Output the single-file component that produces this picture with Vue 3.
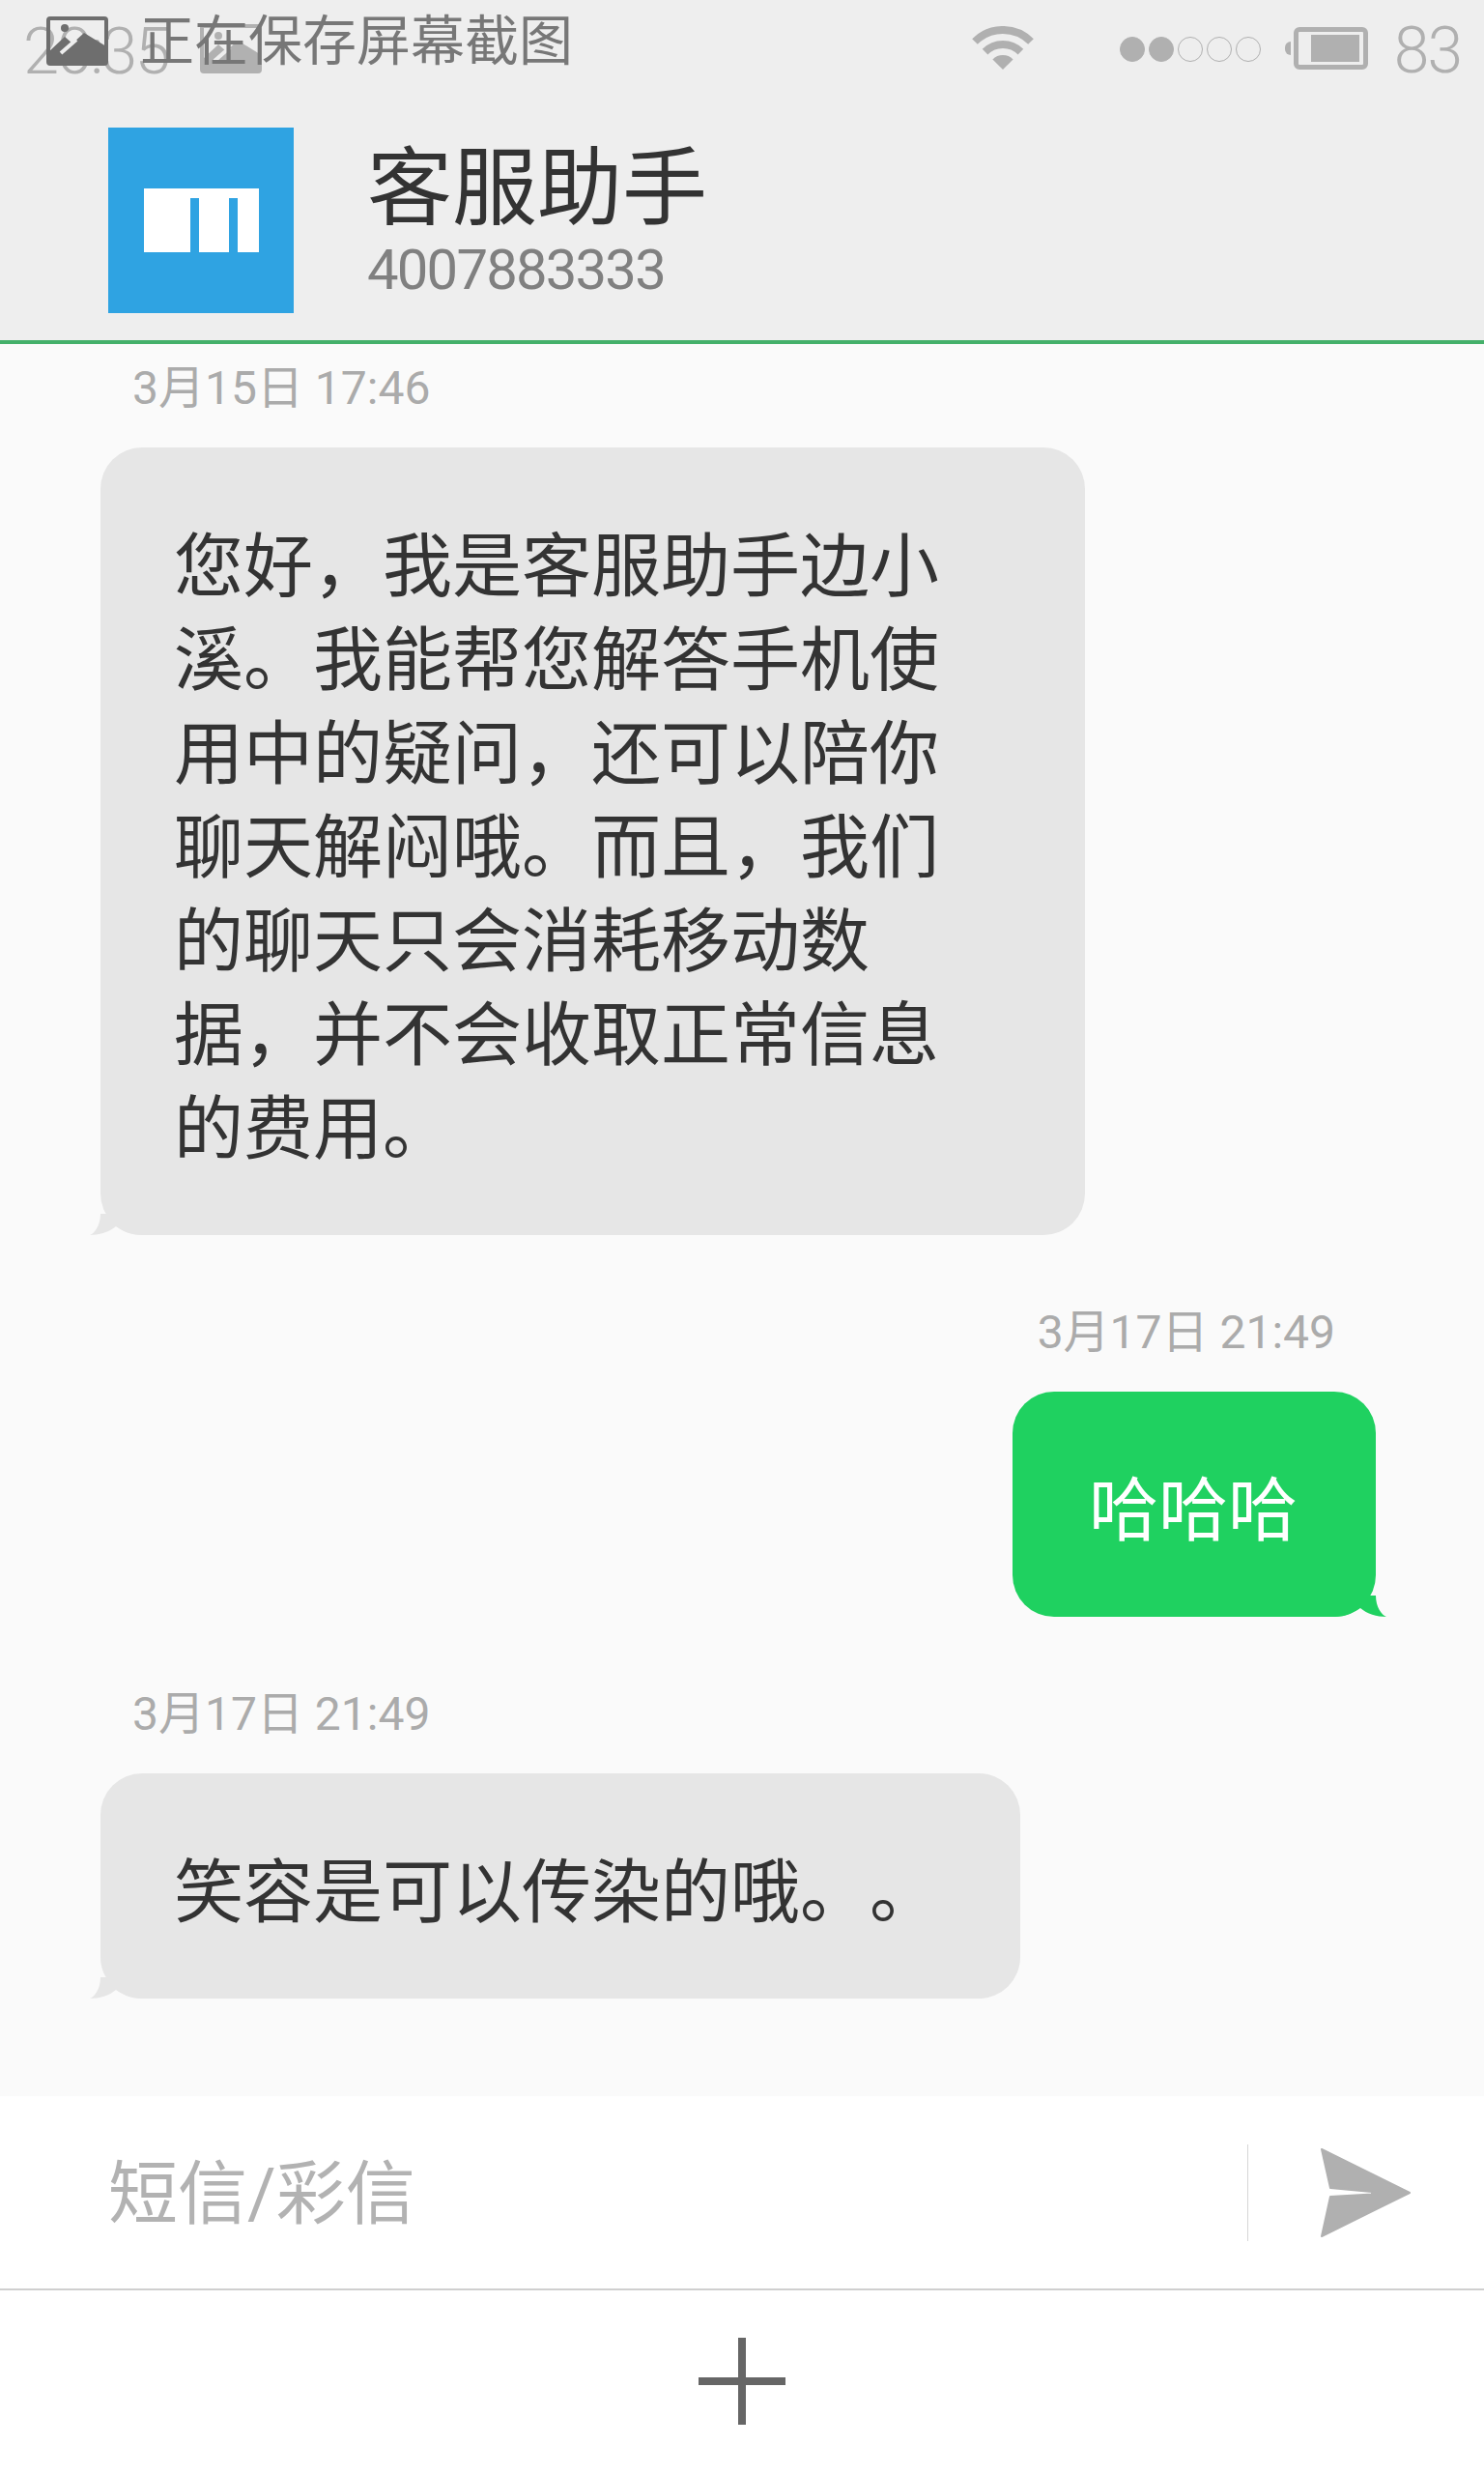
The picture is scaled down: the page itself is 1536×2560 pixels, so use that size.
<template>
  <div class="phone">
    <header class="top">
      <div class="status">
        <span class="clock">20:35</span>
        <svg class="pic pic-ghost" viewBox="0 0 64 51">
          <rect x="2" y="2" width="60" height="47" rx="2" fill="none" stroke="currentColor" stroke-width="4" />
          <circle cx="19" cy="12" r="4" fill="currentColor" />
          <path d="M2 37 19 21 27 28 39 17 62 31V49H2Z" fill="currentColor" />
          <path d="M15 38 31 24" stroke="#eee" stroke-width="4" />
        </svg>
        <div class="status-right">
          <svg class="wifi" viewBox="0 0 64 45">
            <path d="M3 16A41 41 0 0 1 61 16" fill="none" stroke="#b0b0b0" stroke-width="8" />
            <path d="M13.6 26.6A26 26 0 0 1 50.4 26.6" fill="none" stroke="#b0b0b0" stroke-width="8" />
            <path d="M32 45 21.4 34.4A15 15 0 0 1 42.6 34.4Z" fill="#b0b0b0" />
          </svg>
          <div class="signal">
            <i v-for="n in 5" :key="n" class="dot" :class="{ on: n <= 2 }"></i>
          </div>
          <div class="battery">
            <i class="nub"></i>
            <div class="cell"><i class="level"></i></div>
          </div>
          <span class="percent">83</span>
        </div>
      </div>

      <!-- screenshot toast sits on top of the status bar -->
      <div class="toast">
        <svg class="pic pic-front" viewBox="0 0 64 51">
          <rect x="2" y="2" width="60" height="47" rx="2" fill="none" stroke="currentColor" stroke-width="4" />
          <circle cx="19" cy="12" r="4" fill="currentColor" />
          <path d="M2 37 19 21 27 28 39 17 62 31V49H2Z" fill="currentColor" />
          <path d="M15 38 31 24" stroke="#eee" stroke-width="4" />
        </svg>
        <span class="toast-text">正在保存屏幕截图</span>
      </div>

      <div class="contact">
        <div class="logo">
          <div class="logo-mark"><i></i><i></i></div>
        </div>
        <div class="who">
          <div class="name">客服助手</div>
          <div class="number">4007883333</div>
        </div>
      </div>
    </header>

    <main class="thread">
      <div v-for="m in messages" :key="m.id" class="msg" :class="m.mine ? 'mine' : 'theirs'">
        <div class="time">{{ m.time }}</div>
        <div class="bubble" :class="m.size">
          {{ m.text }}
          <svg class="tail" viewBox="0 0 54 22">
            <path d="M11 0C11 12 5 20 0 22 10 22 20 19 27 13 33 17 41 22 54 22V0Z" />
          </svg>
        </div>
      </div>
    </main>

    <div class="composer">
      <span class="hint">短信/彩信</span>
      <i class="sep"></i>
      <svg class="send" viewBox="0 0 93 92">
        <path d="M1 1 92 46 1 91 10 50 53 47.5V45L10 41Z" fill="#b0b0b0" stroke="#b0b0b0" stroke-width="2" stroke-linejoin="round" />
      </svg>
    </div>

    <div class="more">
      <div class="plus"></div>
    </div>
  </div>
</template>

<script setup>
const messages = [
  {
    id: 1,
    time: '3月15日 17:46',
    text: '您好，我是客服助手边小溪。我能帮您解答手机使用中的疑问，还可以陪你聊天解闷哦。而且，我们的聊天只会消耗移动数据，并不会收取正常信息的费用。',
    size: 'wide'
  },
  { id: 2, time: '3月17日 21:49', text: '哈哈哈', mine: true, size: 'short' },
  { id: 3, time: '3月17日 21:49', text: '笑容是可以传染的哦。。', size: 'mid' }
]
</script>

<style>
html, body { background: #fafafa; }
</style>

<style scoped>
.phone {
  position: relative;
  width: 1536px;
  height: 2560px;
  display: flex;
  flex-direction: column;
  background: #fafafa;
  font-family: Roboto, "Noto Sans CJK SC", sans-serif;
  color: #333;
  overflow: hidden;
}
i { display: block; }

.top {
  box-sizing: border-box;
  height: 356px;
  flex: none;
  background: #eee;
  border-bottom: 4px solid #44b06a;
}
.status {
  height: 100px;
  display: flex;
  align-items: center;
  padding-left: 24px;
  padding-right: 24px;
}
.clock {
  width: 183px;
  font-size: 67px;
  font-weight: 300;
  letter-spacing: -2.5px;
  line-height: 100px;
  margin-top: 5px;
  color: #b0b0b0;
}
.pic { width: 64px; height: 51px; flex: none; }
.pic-ghost { color: #b1b1b1; }
.pic-front { color: #6e6e6e; }
.status-right {
  margin-left: auto;
  display: flex;
  align-items: center;
}
.wifi { width: 64px; height: 45px; margin-top: -1px; }
.signal { display: flex; gap: 4px; margin-left: 89px; margin-top: 2px; }
.dot {
  box-sizing: border-box;
  width: 26px;
  height: 26px;
  border: 1px solid #b0b0b0;
  border-radius: 50%;
}
.dot.on { background: #b0b0b0; }
.battery { display: flex; align-items: center; margin-left: 25px; }
.nub {
  width: 6px;
  height: 14px;
  background: #b0b0b0;
  border-radius: 7px 0 0 7px;
  margin-right: 3px;
}
.cell {
  box-sizing: border-box;
  width: 77px;
  height: 44px;
  padding: 3px 4px 3px 13px;
  border: 5px solid #b0b0b0;
  border-radius: 6px;
}
.level { height: 100%; background: #b0b0b0; }
.percent {
  margin-left: 27px;
  margin-top: 6px;
  font-size: 66px;
  font-weight: 300;
  line-height: 100px;
  color: #b0b0b0;
  letter-spacing: -2px;
}

.toast {
  position: absolute;
  left: 48px;
  top: 17px;
  display: flex;
  align-items: center;
  gap: 33px;
  height: 51px;
  font-size: 56px;
  color: #777;
}
.toast-text { line-height: 51px; margin-top: 2px; }

.contact {
  display: flex;
  gap: 76px;
  margin-top: 32px;
  padding-left: 112px;
}
.logo {
  width: 192px;
  height: 192px;
  background: #2fa3e2;
  display: flex;
  align-items: center;
  justify-content: center;
  flex: none;
}
.logo-mark {
  width: 119px;
  height: 66px;
  background: #fff;
  display: flex;
  gap: 31px;
  padding-left: 48px;
  box-sizing: border-box;
}
.logo-mark i {
  width: 9px;
  height: 56px;
  margin-top: 10px;
  background: #2fa3e2;
}
.who { padding-top: 13px; }
.name { font-size: 88px; line-height: 100px; color: #333; }
.number {
  margin-top: 2px;
  font-size: 58px;
  line-height: 64px;
  color: #808080;
  letter-spacing: -1.8px;
}

.thread {
  flex: 1;
  padding-top: 15px;
}
.msg { margin-bottom: 70px; }
.msg.theirs { padding-left: 104px; }
.msg.mine {
  display: flex;
  flex-direction: column;
  align-items: flex-end;
  padding-right: 112px;
}
.time {
  font-size: 48px;
  line-height: 60px;
  color: #ababab;
  margin-bottom: 32px;
  transform: translateY(1px);
}
.theirs .time { padding-left: 33px; }
.mine .time { padding-right: 42px; }

.bubble {
  position: relative;
  box-sizing: border-box;
  padding: 75px 0 61px 76px;
  border-radius: 43px;
  font-size: 72px;
  line-height: 97px;
  background: #e6e6e6;
  text-spacing-trim: space-all;
}
.bubble.wide { width: 1019px; padding-right: 143px; }
.bubble.mid { width: 952px; padding-right: 84px; }
.bubble.short {
  width: 376px;
  padding-left: 79px;
  padding-right: 80px;
  background: #1fd160;
  color: #fff;
}
.tail {
  position: absolute;
  left: -11px;
  bottom: 0;
  width: 54px;
  height: 22px;
  fill: #e6e6e6;
}
.mine .tail {
  left: auto;
  right: -11px;
  fill: #1fd160;
  transform: scaleX(-1);
}

.composer {
  flex: none;
  height: 199px;
  display: flex;
  align-items: center;
  padding-left: 112px;
  background: #fff;
}
.hint {
  font-size: 72px;
  line-height: 100px;
  color: #b2b2b2;
  width: 1179px;
  flex: none;
  margin-top: 4px;
}
.sep { width: 1px; height: 100px; background: #d6d6d6; }
.send { width: 93px; height: 92px; margin-left: 75px; }

.more {
  flex: none;
  box-sizing: border-box;
  height: 192px;
  border-top: 2px solid #cfcfcf;
  background: #fff;
  display: flex;
  align-items: center;
  justify-content: center;
  padding-bottom: 2px;
}
.plus {
  width: 90px;
  height: 90px;
  background:
    linear-gradient(#666, #666) center / 90px 8px no-repeat,
    linear-gradient(#666, #666) center / 8px 90px no-repeat;
}
</style>
